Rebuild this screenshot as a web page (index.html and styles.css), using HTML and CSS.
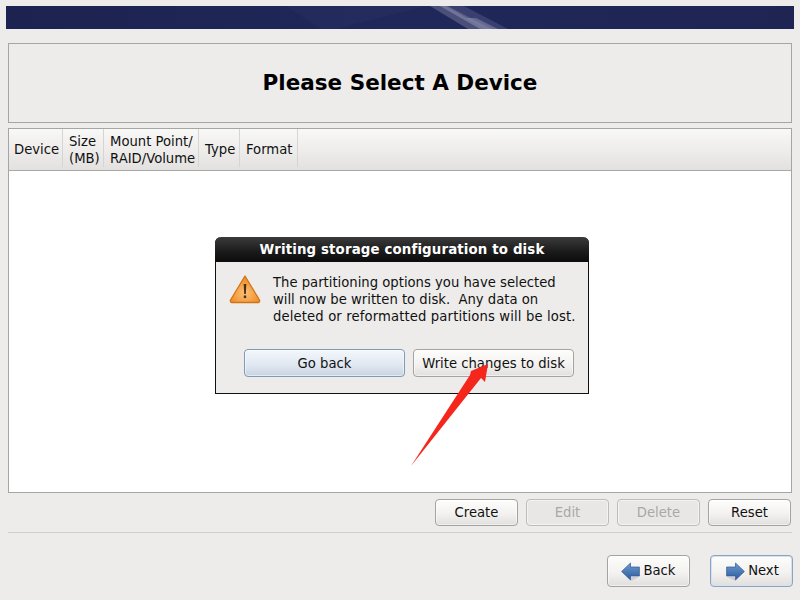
FILE: index.html
```html
<!DOCTYPE html>
<html lang="en">
<head>
<meta charset="utf-8">
<title>Please Select A Device</title>
<link rel="stylesheet" href="styles.css">
</head>
<body>
<div class="page">
  <header class="banner">
    <svg class="banner-art" width="788" height="23" viewBox="0 0 788 23" aria-hidden="true">
      <polygon points="280,0 420,0 330,23 315,23" fill="#2f3566" opacity=".3"/>
      <polygon points="424,0 440,0 480,23 462,23" fill="#6d7196" opacity=".55"/>
      <polygon points="434,0 442,0 486,23 474,23" fill="#9598b4" opacity=".5"/>
      <polygon points="442,0 458,0 502,23 482,23" fill="#4b5080" opacity=".6"/>
      <polygon points="460,12 470,12 492,23 480,23" fill="#a5a8c0" opacity=".4"/>
    </svg>
  </header>
  <section class="title-box"><h1 class="title">Please Select A Device</h1></section>
  <section class="table-box">
    <div class="table-head">
      <div class="col col-device">Device</div>
      <div class="col col-size">Size<br>(MB)</div>
      <div class="col col-mount">Mount Point/<br>RAID/Volume</div>
      <div class="col col-type">Type</div>
      <div class="col col-format">Format</div>
    </div>
    <div class="table-body"></div>
  </section>
  <div class="actions">
    <button class="btn">Create</button>
    <button class="btn" disabled>Edit</button>
    <button class="btn" disabled>Delete</button>
    <button class="btn">Reset</button>
  </div>
  <hr class="rule">
  <nav class="nav">
    <button class="btn nav-btn">
      <svg class="nav-icon" width="19" height="20" viewBox="0 0 19 20" aria-hidden="true"><defs><linearGradient id="ga" x1="0" y1="0" x2="0" y2="1"><stop offset="0" stop-color="#6f9bd0"/><stop offset="1" stop-color="#2a5a9c"/></linearGradient></defs><path d="M10 19 L18 15 H10 Z" fill="#bdbcba" opacity=".6"/><path d="M.6 9.5 L9.5 1 V5 H18.4 V14 H9.5 V18 Z" fill="url(#ga)" stroke="#2d5a96" stroke-width=".7"/></svg>
      <span>Back</span>
    </button>
    <button class="btn nav-btn nav-next">
      <svg class="nav-icon" width="19" height="20" viewBox="0 0 19 20" aria-hidden="true"><path d="M9 19 L1 15 H9 Z" fill="#bdbcba" opacity=".6"/><path d="M18.4 9.5 L9.5 1 V5 H.6 V14 H9.5 V18 Z" fill="url(#ga)" stroke="#2d5a96" stroke-width=".7"/></svg>
      <span>Next</span>
    </button>
  </nav>
</div>
<div class="dialog">
  <div class="dialog-title">Writing storage configuration to disk</div>
  <div class="dialog-main">
    <svg class="warn" width="32" height="30" viewBox="0 0 32 30" aria-hidden="true"><defs><radialGradient id="gw" cx=".5" cy=".65" r=".6"><stop offset="0" stop-color="#fbc078"/><stop offset="1" stop-color="#ef8a20"/></radialGradient></defs><path d="M16 2 L30.5 26 Q31 28.5 29 28.5 H3 Q1 28.5 1.5 26 Z" fill="url(#gw)" stroke="#cf7516" stroke-width="1.3" stroke-linejoin="round"/><path d="M14.7 10 H17.3 L16.8 20 H15.2 Z" fill="#4a3010"/><rect x="14.8" y="21.5" width="2.4" height="2.6" fill="#4a3010"/></svg>
    <p class="dialog-text">The partitioning options you have selected<br>will now be written to disk.&nbsp; Any data on<br><span class="text-wide">deleted or reformatted partitions will be lost.</span></p>
  </div>
  <div class="dialog-actions">
    <button class="btn dlg-btn dlg-default">Go back</button>
    <button class="btn dlg-btn">Write changes to disk</button>
  </div>
</div>
<svg class="arrow" width="82" height="110" viewBox="0 0 82 110" aria-hidden="true"><path d="M1 109 L60 18 L61 14 L78 7 L75 25 L71 21 Z" fill="#f5271d"/></svg>
</body>
</html>
```

FILE: styles.css
```css
* { box-sizing: border-box; }
html, body { margin: 0; height: 100%; }
body {
  width: 800px;
  height: 600px;
  overflow: hidden;
  position: relative;
  background: #edecea;
  font-family: "DejaVu Sans", sans-serif;
  font-size: 13.2px;
  color: #111;
}
.page { display: flex; flex-direction: column; height: 600px; padding: 6px 8px 0; }
.banner {
  margin: 0 -2px;
  height: 23px;
  flex: none;
  background: linear-gradient(90deg, #1c2350 0%, #20285a 50%, #1e2553 100%);
  overflow: hidden;
}
.banner-art { display: block; }
.title-box {
  margin-top: 14px;
  height: 80px;
  flex: none;
  border: 1px solid #a5a5a3;
  display: flex;
  align-items: center;
  justify-content: center;
  padding-bottom: 2px;
}
.title { margin: 0; font-size: 21.5px; font-weight: 700; color: #000; }
.table-box {
  margin-top: 5px;
  height: 365px;
  flex: none;
  border: 1px solid #a5a5a3;
  background: #fff;
  display: flex;
  flex-direction: column;
}
.table-head {
  height: 42px;
  flex: none;
  display: flex;
  background: linear-gradient(#f8f8f7 0%, #eeedeb 50%, #e2e1df 100%);
  border-bottom: 1px solid #a8a8a6;
  line-height: 17px;
}
.col {
  display: flex;
  align-items: center;
  padding: 2px 0 0 5px;
  border-right: 1px solid #d5d5d3;
  margin-bottom: 3px;
  white-space: nowrap;
}
.col-device { width: 54px; }
.col-size { width: 41px; padding-left: 6px; padding-top: 4px; }
.col-mount { width: 95px; padding-left: 6px; padding-top: 4px; }
.col-type { width: 41px; padding-left: 6px; }
.col-format { width: 58px; padding-left: 6px; }
.table-body { flex: 1; }
.actions {
  display: flex;
  justify-content: flex-end;
  gap: 8px;
  margin: 6px 1px 0 0;
  height: 27px;
  flex: none;
}
.btn {
  font: inherit;
  color: #111;
  width: 83px;
  height: 27px;
  padding: 0;
  border: 1px solid #a3a3a1;
  border-radius: 4px;
  background: linear-gradient(#fdfdfc 0%, #f3f2f0 55%, #e0dfdd 100%);
  box-shadow: inset 0 0 0 1px rgba(255,255,255,.5);
}
.btn:disabled { color: #a8a8a6; background: #e8e7e5; border-color: #bcbcba; }
.rule { margin: 6px 0 0; border: 0; border-top: 1px solid #d0d0ce; flex: none; width: 784px; }
.nav {
  display: flex;
  justify-content: flex-end;
  gap: 20px;
  margin: 22px -1px 0 0;
  flex: none;
}
.nav-btn {
  height: 32px;
  width: 83px;
  padding-bottom: 2px;
  display: flex;
  align-items: center;
  justify-content: center;
  gap: 3px;
}
.nav-icon { flex: none; margin-top: 3px; }
.nav-next { padding-left: 2px; border-color: #8ba4c0; box-shadow: inset 0 0 0 1px #d4e2f0; }
.dialog {
  position: absolute;
  left: 215px;
  top: 237px;
  width: 374px;
  height: 157px;
  background: #edecea;
  border: 1px solid #111;
  border-top: 0;
  border-radius: 6px 6px 0 0;
  display: flex;
  flex-direction: column;
}
.dialog-title {
  margin: 0 -1px;
  height: 25px;
  flex: none;
  border-radius: 6px 6px 0 0;
  background: linear-gradient(#3b3b3b 0%, #1a1a1a 60%, #0c0c0c 100%);
  color: #fff;
  font-weight: 700;
  font-size: 13.33px;
  line-height: 25px;
  text-align: center;
  letter-spacing: .15px;
}
.dialog-main { display: flex; padding: 12px 0 0 13px; gap: 12px; height: 87px; flex: none; }
.warn { flex: none; }
.dialog-text { margin: 0; line-height: 17px; white-space: nowrap; }
.text-wide { letter-spacing: .13px; }
.dialog-actions { display: flex; justify-content: flex-end; gap: 8px; padding-right: 14px; }
.dlg-btn { width: 161px; height: 28px; }
.dlg-default {
  border-color: #7f99b8;
  background: linear-gradient(#f3f7fb 0%, #dfe7f0 60%, #c7d3e1 100%);
}
.arrow { position: absolute; left: 410px; top: 357px; }
```
